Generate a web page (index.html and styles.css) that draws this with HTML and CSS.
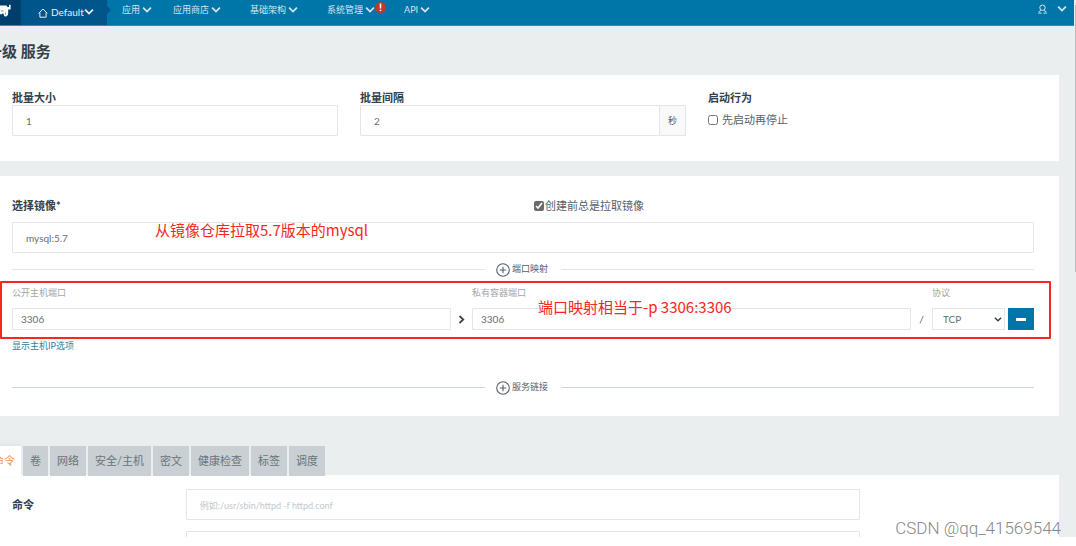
FILE: index.html
```html
<!DOCTYPE html>
<html lang="zh-CN">
<head>
<meta charset="utf-8">
<title>升级 服务</title>
<link rel="stylesheet" href="styles.css">
</head>
<body>
<svg class="defs" aria-hidden="true">
  <symbol id="chev" viewBox="0 0 9 7"><path d="M1 1.400 4.500 4.900 8 1.400" fill="none" stroke="currentColor" stroke-width="1.600"/></symbol>
  <symbol id="plus" viewBox="0 0 14 14"><circle cx="7" cy="7" r="6.300" fill="none" stroke="currentColor" stroke-width="1.100"/><path d="M7 3.800v6.400M3.800 7h6.400" stroke="currentColor" stroke-width="1.100"/></symbol>
</svg>
<div class="app">
  <header class="topbar">
    <a class="logo" href="#" aria-label="Rancher"><svg viewBox="0 0 12 14"><path d="M0 1.500h6.500l1 1.500h1.500V.8h1.600v4.700H8.200V9q.2 2.500-1.700 3.300-2 .6-2.500-.8L3.500 9.500H2l-.3 1L0 10z" fill="#fff"/><path d="M1 7h2.500M5.500 8.500v2" stroke="#4d7d9d" stroke-width=".8"/></svg></a>
    <button class="env" type="button"><svg class="home" viewBox="0 0 10 10"><path d="M.6 5.400 5 1l4.400 4.400M1.900 4.500v4.700h6.200V4.500" fill="none" stroke="currentColor" stroke-width="1"/></svg><span>Default</span><svg class="chev"><use href="#chev"/></svg></button>
    <nav class="nav">
      <a class="item apps" href="#">应用<svg class="chev"><use href="#chev"/></svg></a>
      <a class="item" href="#">应用商店<svg class="chev"><use href="#chev"/></svg></a>
      <a class="item" href="#">基础架构<svg class="chev"><use href="#chev"/></svg></a>
      <a class="item" href="#">系统管理<svg class="chev"><use href="#chev"/></svg><svg class="alert" viewBox="0 0 11 11"><circle cx="5.500" cy="5.500" r="5.400" fill="#c5372c"/><path d="M5.500 1.500v5M5.500 7.700v1.400" stroke="#fff" stroke-width="1.500"/></svg></a>
      <a class="item" href="#">API<svg class="chev"><use href="#chev"/></svg></a>
    </nav>
    <button class="user" type="button" aria-label="用户"><svg class="person" viewBox="0 0 9 11"><path d="M1 10V8.500Q1 6.800 3 6.500M8 10V8.500Q8 6.800 6 6.500M2.800 10V8.500M6.200 10V8.500" fill="none" stroke="currentColor"/><circle cx="4.500" cy="3.700" r="2.700" fill="none" stroke="currentColor"/></svg><svg class="chev"><use href="#chev"/></svg></button>
  </header>

  <main class="page">
    <h1 class="title">升级 服务</h1>

    <section class="panel batch">
      <div class="field">
        <label class="label" for="size">批量大小</label>
        <input class="input" id="size" value="1">
      </div>
      <div class="field">
        <label class="label" for="interval">批量间隔</label>
        <div class="group"><input class="input" id="interval" value="2"><span class="addon">秒</span></div>
      </div>
      <div class="field">
        <span class="label">启动行为</span>
        <label class="check start"><input type="checkbox" class="box">先启动再停止</label>
      </div>
    </section>

    <section class="panel image">
      <div class="imagehead">
        <label class="label" for="image">选择镜像*</label>
        <label class="check"><input type="checkbox" class="box" checked>创建前总是拉取镜像</label>
      </div>
      <div class="imagefield">
        <input class="input" id="image" value="mysql:5.7">
        <span class="note note-image">从镜像仓库拉取5.7版本的mysql</span>
      </div>
      <div class="divider"><button class="add" type="button"><svg class="plus"><use href="#plus"/></svg>端口映射</button></div>
      <div class="ports">
        <label class="hint" for="public">公开主机端口</label><span></span>
        <label class="hint" for="private">私有容器端口</label><span></span>
        <label class="hint" for="proto">协议</label><span></span>
        <input class="input small" id="public" value="3306">
        <svg class="arrow" viewBox="0 0 7 9"><path d="M1.500 1 5.300 4.500 1.500 8" fill="none" stroke="currentColor" stroke-width="1.700"/></svg>
        <input class="input small" id="private" value="3306">
        <span class="slash">/</span>
        <span class="pick"><select class="select" id="proto"><option>TCP</option><option>UDP</option></select><svg class="caret"><use href="#chev"/></svg></span>
        <button class="remove" type="button" aria-label="删除"><svg viewBox="0 0 10 4"><path d="M0 0h10v3H0z" fill="#fff"/></svg></button>
        <span class="frame"></span>
        <span class="note note-port">端口映射相当于-p 3306:3306</span>
      </div>
      <a class="hostip" href="#">显示主机IP选项</a>
      <div class="divider dark"><button class="add" type="button"><svg class="plus"><use href="#plus"/></svg>服务链接</button></div>
    </section>

    <div class="tabs" role="tablist">
      <button class="tab active" type="button" role="tab" aria-selected="true">命令</button>
      <button class="tab" type="button" role="tab">卷</button>
      <button class="tab" type="button" role="tab">网络</button>
      <button class="tab" type="button" role="tab">安全/主机</button>
      <button class="tab" type="button" role="tab">密文</button>
      <button class="tab" type="button" role="tab">健康检查</button>
      <button class="tab" type="button" role="tab">标签</button>
      <button class="tab" type="button" role="tab">调度</button>
    </div>
    <section class="panel command">
      <label class="label" for="cmd">命令</label>
      <input class="input" id="cmd" placeholder="例如:/usr/sbin/httpd -f httpd.conf">
      <label class="label" for="entry"></label>
      <input class="input" id="entry" aria-label="入口">
    </section>
  </main>
  <span class="scroll"></span>
</div>
<span class="mark">CSDN @qq_41569544</span>
</body>
</html>
```
FILE: styles.css
```css
* { box-sizing: border-box; }
body {
  margin: 0;
  background: #fff;
  color: #53616c;
  font: 11px/16px Lato, "Noto Sans CJK SC", sans-serif;
  overflow: hidden;
}
button, input, select { font: inherit; color: inherit; margin: 0; }
button { border: 0; background: none; padding: 0; }
a { text-decoration: none; }
svg { flex: none; }
.defs { position: absolute; width: 0; height: 0; }
.app {
  position: relative;
  height: calc(100vh - 9px);
  overflow: hidden;
  background: #eaeeef;
}

.topbar {
  display: flex;
  height: 26px;
  margin-right: 2px;
  background: #0075a8;
  border-bottom: 1px solid #2b8db8;
  color: #d3e6ef;
}
.logo { width: 21px; background: #003f6c; }
.logo svg { display: block; width: 12px; height: 14px; margin-top: 4px; }
.env {
  position: relative;
  display: flex;
  align-items: center;
  width: 86px;
  padding-left: 17px;
  background: #00558b;
  color: #e6f0f5;
  font-size: 10px;
}
.env span { margin-top: -2px; }
.env .chev { margin-left: 0; margin-top: -2px; }
.env::after {
  content: "";
  position: absolute;
  left: 100%;
  top: 6px;
  border: solid transparent;
  border-width: 4px 0 4px 4px;
  border-left-color: #00558b;
}
.home { width: 10px; height: 10px; margin-right: 3px; }
.chev { width: 10px; height: 8px; margin-left: 2px; }
.nav { display: flex; gap: 21px; padding-left: 15px; font-size: 9px; }
.item {
  position: relative;
  display: flex;
  align-items: center;
  height: 20px;
  color: inherit;
}
.item + .item { margin-left: 8px; }
.apps + .item { margin-left: 0; }
.alert { position: absolute; left: 100%; top: 2px; width: 11px; height: 11px; }
.user {
  display: flex;
  align-items: center;
  gap: 8px;
  height: 18px;
  margin-left: auto;
  padding-right: 7px;
}
.person { width: 9px; height: 11px; }

.page { margin-right: 17px; }
.title {
  margin: 0 0 0 -13px;
  padding: 15px 0 14px;
  font-size: 15px;
  line-height: 20px;
  color: #33414d;
}
.panel { background: #fff; padding: 0 25px 0 12px; }
.label { display: block; font-weight: 700; line-height: 15px; color: #33414d; }
.input {
  display: block;
  width: 100%;
  min-width: 0;
  height: 31px;
  padding: 1px 13px 0;
  border: 1px solid #e2e6e7;
  border-radius: 1px;
  background: #fff;
  color: #666e75;
  font-size: 10px;
  outline: 0;
}
.input::placeholder { color: #c3c8cb; font-size: 9px; }
.batch {
  display: grid;
  grid-template-columns: repeat(3, 1fr);
  gap: 22px;
  padding-top: 15px;
  padding-bottom: 25px;
}
.group { display: flex; }
.addon {
  width: 26px;
  flex: none;
  border: 1px solid #e2e6e7;
  border-left: 0;
  background: #f9f9f9;
  font-size: 9px;
  line-height: 29px;
  text-align: center;
}
.check { display: flex; align-items: center; }
.start { height: 30px; gap: 3px; }
.box { width: 10px; height: 10px; margin: 0 1px 0 0; accent-color: #6b6b6b; }

.image { margin-top: 15px; padding-top: 22px; padding-bottom: 21px; }
.imagehead { display: grid; grid-template-columns: 1fr 1fr; margin-bottom: 8px; }
.imagehead .check { padding-left: 11px; }
.imagefield { position: relative; }
.note {
  position: absolute;
  color: #f5281c;
  font: 15px/20px "Noto Sans CJK SC", sans-serif;
  white-space: nowrap;
}
.note-image { left: 143px; top: -2px; }
.note-port { left: 526px; top: 20px; }
.divider {
  display: flex;
  align-items: center;
  height: 16px;
  margin-top: 8px;
}
.divider::before, .divider::after { content: ""; flex: 1; height: 1px; background: #e2e6e7; }
.dark::before, .dark::after { background: #cdd4d6; }
.add {
  display: flex;
  align-items: center;
  gap: 2px;
  width: 76px;
  padding-left: 11px;
  font-size: 9px;
}
.plus { width: 14px; height: 14px; margin-top: 2px; }
.ports {
  position: relative;
  display: grid;
  grid-template-columns: 1fr 21px 1fr 21px 73px 29px;
  align-items: center;
  padding: 8px 0;
  row-gap: 7px;
}
.hint { color: #a2a7aa; font-size: 9px; }
.small { height: 22px; padding: 0 8px; }
.arrow { width: 7px; height: 9px; justify-self: center; color: #33414d; }
.slash { text-align: center; font-size: 10px; }
.pick { position: relative; }
.select {
  display: block;
  width: 100%;
  height: 22px;
  padding: 0 10px;
  border: 1px solid #e2e6e7;
  background: #fff;
  color: #666e75;
  font-size: 10px;
  appearance: none;
}
.caret { position: absolute; right: 3px; top: 8px; width: 8px; height: 7px; color: #33414d; pointer-events: none; }
.remove {
  display: grid;
  place-items: center;
  width: 26px;
  height: 22px;
  margin-left: 3px;
  background: #0075a8;
}
.remove svg { width: 10px; height: 4px; margin-top: 2px; }
.frame {
  position: absolute;
  inset: 4px -17px -1px -12px;
  border: 2px solid #f5281c;
  border-radius: 1px;
  pointer-events: none;
}
.hostip { display: block; color: #2a7fa6; font-size: 9px; }
.hostip + .divider { margin-top: 25px; }

.tabs { display: flex; gap: 2px; margin: 30px 0 -1px; position: relative; }
.tab {
  height: 30px;
  padding: 0 7px;
  background: #c9cfd2;
  color: #68747b;
  font-size: 11px;
}
.active {
  margin-left: -14px;
  padding-right: 6px;
  background: #fff;
  color: #ee9152;
  box-shadow: 0 -2px 4px #dfe3e4;
}
.command {
  display: grid;
  grid-template-columns: 17% 66%;
  row-gap: 11px;
  align-items: center;
  padding-top: 14px;
}
.scroll { position: absolute; right: 0; top: 5px; width: 1px; height: 267px; background: #b9bcbd; }
.mark {
  position: absolute;
  right: 15px;
  bottom: 8px;
  color: #85898c;
  font: 300 17px/20px Roboto, sans-serif;
}
```
